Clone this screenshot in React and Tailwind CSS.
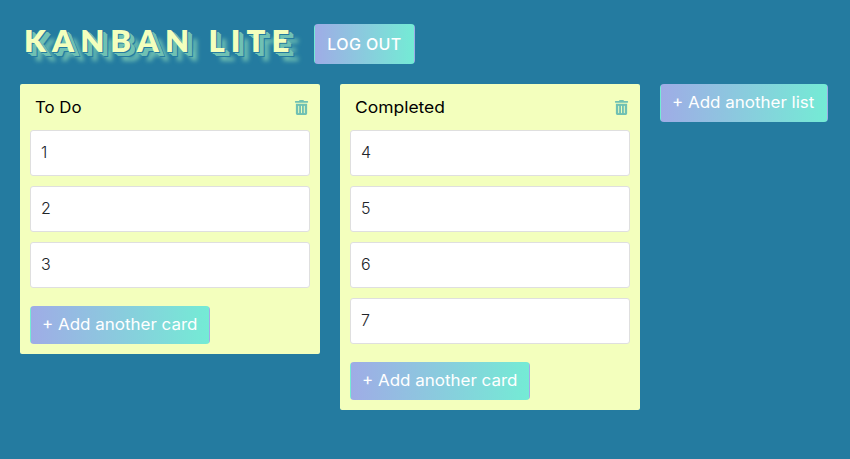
import { FaTrashAlt } from "react-icons/fa";

const lists = [
  { title: "To Do", stretch: "scale-x-[1.05]", cards: ["1", "2", "3"] },
  { title: "Completed", stretch: "scale-x-[1.09]", cards: ["4", "5", "6", "7"] },
];

const gradient =
  "border border-transparent bg-[linear-gradient(to_left,#74ebd5,#9face6)] rounded text-white whitespace-nowrap";

function AddButton({ width, children }) {
  return (
    <button className={`${gradient} ${width} block h-[38px] shrink-0 px-3 pb-[2px] text-left text-base leading-6`}>
      <span className="-ml-px inline-block origin-left scale-x-[1.06]">{children}</span>
    </button>
  );
}

function List({ title, stretch, cards }) {
  return (
    <section className="w-[300px] shrink-0 rounded-[2px] bg-[#f3ffbd] p-[10px]">
      <div className="flex h-9 items-start justify-between pl-[5px]">
        <h2 className={`origin-left pt-px text-base leading-6 text-black ${stretch}`}>{title}</h2>
        <FaTrashAlt className="mt-[6px] mr-[0.8px] size-[15px] text-[#70c1b3]" />
      </div>
      <div className="flex flex-col gap-[10px]">
        {cards.map((c) => (
          <div
            key={c}
            className="h-[46px] rounded-[3px] border border-[#dfdfdf] bg-white px-[10px] py-[9px] text-base leading-6 font-light text-[#212529]"
          >
            {c}
          </div>
        ))}
      </div>
      <div className="mt-[18px]">
        <AddButton width="w-[180px]">+ Add another card</AddButton>
      </div>
    </section>
  );
}

export default function App() {
  return (
    <div className="h-screen overflow-hidden bg-[#247ba0] px-5 pt-6 font-['Inter','Liberation_Sans',sans-serif]">
      <header className="flex h-10 items-start">
        <h1 className="w-[294px] pl-1 font-['Lato',sans-serif] text-[31px] leading-[32px] font-extrabold tracking-[6.1px] whitespace-nowrap text-[#f3ffbd] [text-shadow:1px_1px_0_#247ba0,2px_2px_0_#70c1b3,3px_2px_0_#70c1b3,4px_3px_0_#70c1b3,5px_4px_0_#70c1b3,6px_5px_0_#247ba0,10px_9px_4px_#70c1b3]">
          KANBAN LITE
        </h1>
        <button className={`${gradient} h-10 w-[101px] pb-px text-base font-medium tracking-[0.4px]`}>
          LOG OUT
        </button>
      </header>
      <main className="mt-5 flex items-start gap-5">
        {lists.map((l) => (
          <List key={l.title} {...l} />
        ))}
        <AddButton width="w-[168px]">+ Add another list</AddButton>
      </main>
    </div>
  );
}
